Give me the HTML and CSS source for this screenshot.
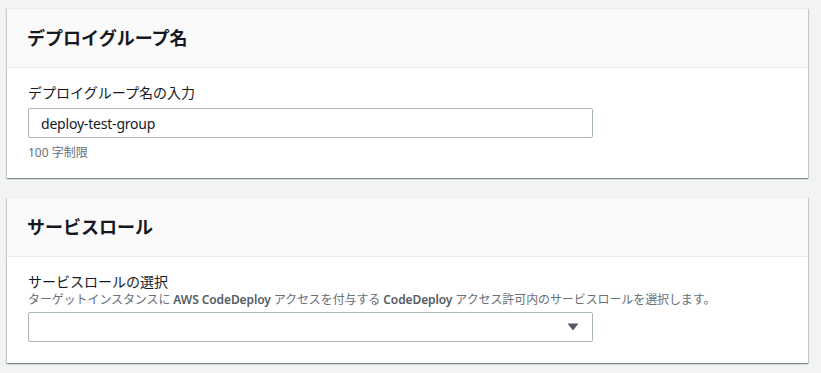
FILE: index.html
```html
<!DOCTYPE html>
<html lang="ja">
<head>
    <meta charset="UTF-8">
    <meta name="viewport" content="width=device-width, initial-scale=1.0">
    <title>デプロイグループの作成</title>
    <link rel="stylesheet" href="styles.css">
</head>
<body>
    <div class="page">
        <section class="panel">
            <div class="panel-header">
                <h2 class="panel-title">デプロイグループ名</h2>
            </div>
            <div class="panel-body panel-body-name">
                <label class="field-label" for="group-name">デプロイグループ名の入力</label>
                <input class="text-input" id="group-name" type="text" value="deploy-test-group">
                <p class="field-hint">100 字制限</p>
            </div>
        </section>

        <section class="panel">
            <div class="panel-header">
                <h2 class="panel-title">サービスロール</h2>
            </div>
            <div class="panel-body panel-body-role">
                <div class="field-label">サービスロールの選択</div>
                <p class="field-desc">ターゲットインスタンスに <span class="em">AWS CodeDeploy</span> アクセスを付与する <span class="em">CodeDeploy</span> アクセス許可内のサービスロールを選択します。</p>
                <div class="select-box">
                    <span class="select-value"></span>
                    <svg class="select-caret" width="12" height="8" viewBox="0 0 12 8">
                        <path d="M0.5 0.5 H11.5 L6 7.5 Z" fill="#545b64"/>
                    </svg>
                </div>
            </div>
        </section>
    </div>
</body>
</html>
```

FILE: styles.css
```css
* {
    margin: 0;
    padding: 0;
    box-sizing: border-box;
}

body {
    font-family: "Noto Sans", "Noto Sans CJK JP", sans-serif;
    background-color: #f2f3f3;
    color: #16191f;
    height: 373px;
    overflow: hidden;
}

.page {
    padding: 8px 13px 0 7px;
    display: flex;
    flex-direction: column;
    gap: 19px;
}

.panel {
    background-color: #ffffff;
    border-top: 1px solid #eaeded;
    box-shadow: 0 1px 1px 0 rgba(0, 28, 36, 0.3),
                1px 1px 1px 0 rgba(0, 28, 36, 0.15),
                -1px 1px 1px 0 rgba(0, 28, 36, 0.15);
}

.panel-header {
    background-color: #fafafa;
    border-bottom: 1px solid #eaeded;
    padding: 18px 20px;
}

.panel-title {
    font-size: 18px;
    line-height: 22px;
    font-weight: 700;
    color: #16191f;
}

.panel-body {
    padding: 15px 20px 17px 21px;
}

.panel-body-role {
    padding-bottom: 21px;
}

.field-label {
    display: block;
    font-size: 14px;
    line-height: 20px;
    color: #16191f;
}

.text-input {
    display: block;
    width: 565px;
    height: 30px;
    margin-top: 5px;
    padding: 0 12px;
    border: 1px solid #aab7b8;
    border-radius: 2px;
    font-family: inherit;
    font-size: 14px;
    letter-spacing: -0.2px;
    color: #16191f;
    background-color: #ffffff;
    outline: none;
}

.field-hint {
    margin-top: 7px;
    font-size: 12px;
    line-height: 16px;
    color: #687078;
}

.field-desc {
    font-size: 12px;
    line-height: 16px;
    letter-spacing: -0.1px;
    color: #687078;
}

.field-desc .em {
    font-weight: 600;
    color: #545b64;
}

.select-box {
    display: flex;
    align-items: center;
    justify-content: space-between;
    width: 565px;
    height: 30px;
    margin-top: 4px;
    padding: 0 13px 0 12px;
    border: 1px solid #aab7b8;
    border-radius: 2px;
    background-color: #ffffff;
}
```
